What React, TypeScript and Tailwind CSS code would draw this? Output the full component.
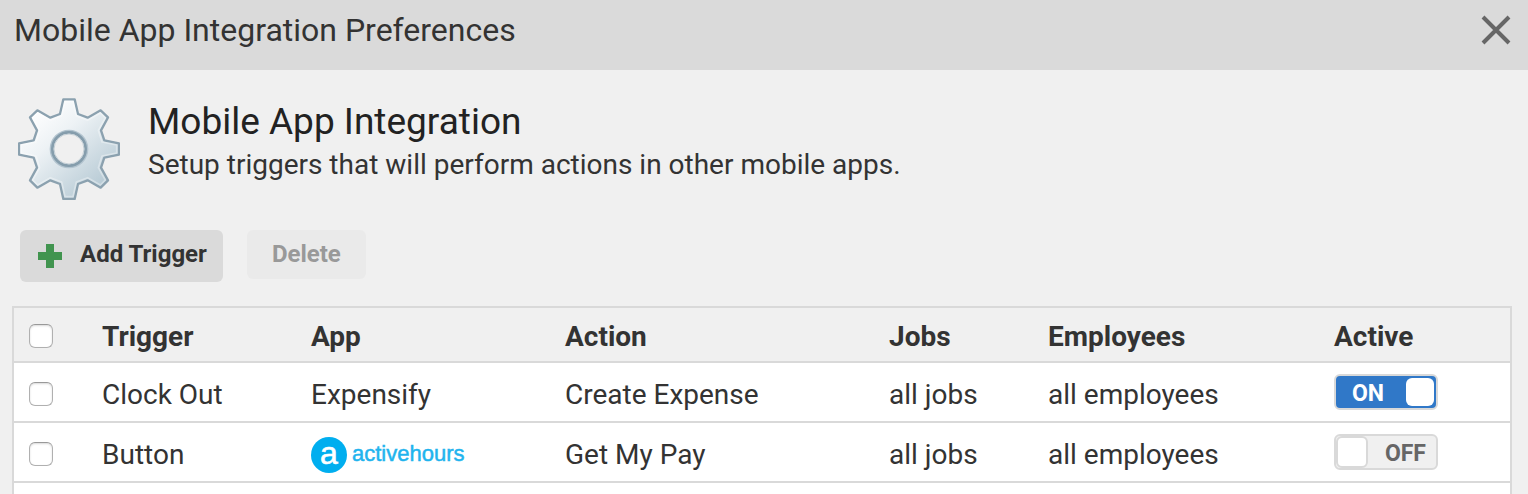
import { useState } from "react";
import clsx from "clsx";

const initialTriggers = [
  { id: 1, trigger: "Clock Out", app: "Expensify", action: "Create Expense", jobs: "all jobs", employees: "all employees", active: true },
  { id: 2, trigger: "Button", app: "activehours", action: "Get My Pay", jobs: "all jobs", employees: "all employees", active: false },
];

function GearIcon() {
  return (
    <svg viewBox="-153 -153 306 306" className="h-[102px] w-[102px] shrink-0" aria-hidden="true">
      <defs>
        <linearGradient id="gear-fill" x1="0.15" y1="0.1" x2="0.85" y2="0.9">
          <stop offset="0" stopColor="#ffffff" />
          <stop offset="0.35" stopColor="#edf2f5" />
          <stop offset="1" stopColor="#b4c8d3" />
        </linearGradient>
      </defs>
      <path
        fillRule="evenodd"
        fill="url(#gear-fill)"
        stroke="#8ba1af"
        strokeWidth="7"
        strokeLinejoin="round"
        d="M-17-149H17L27-105L56-94L95-116L117-95L96-56L106-26L150-17V17L106 26L96 56L117 94L95 116L56 94L27 105L17 150H-17L-27 105L-56 94L-95 116L-117 94L-96 56L-106 26L-150 17V-17L-106-26L-96-56L-117-95L-95-116L-56-94L-27-105ZM0-51A51 51 0 1 0 0 51A51 51 0 1 0 0-51Z"
      />
      <path
        fill="none"
        stroke="#ffffff"
        strokeOpacity="0.35"
        strokeWidth="5"
        strokeLinejoin="round"
        d="M-12-142H12L22-99L56-86L94-108L109-93L88-56L99-21L143-12V12L99 21L88 56L109 93L94 108L56 86L22 99L12 143H-12L-22 99L-56 86L-94 108L-109 93L-88 56L-99 21L-143 12V-12L-99-21L-88-56L-109-93L-94-108L-56-86L-22-99Z"
      />
      <circle r="55" fill="none" stroke="#b3c4cf" strokeWidth="6" />
      <circle r="50" fill="none" stroke="#859dac" strokeWidth="8" />
      <circle r="45" fill="none" stroke="#c3cfd6" strokeWidth="3" />
    </svg>
  );
}

function ActiveHoursLogo() {
  return (
    <svg viewBox="0 0 160 40" className="h-10 w-40" role="img" aria-label="activehours">
      <circle cx="18" cy="20" r="18" fill="#00aeef" />
      <text x="18" y="29" textAnchor="middle" fontSize="32" fontFamily="Liberation Sans, sans-serif" fill="#ffffff" stroke="#ffffff" strokeWidth="0.6">a</text>
      <text x="41" y="26" fontSize="22" fontFamily="Liberation Sans, sans-serif" fill="#1fb4ee" stroke="#1fb4ee" strokeWidth="0.5">activehours</text>
    </svg>
  );
}

function Checkbox({ label }: { label: string }) {
  return (
    <input
      type="checkbox"
      aria-label={label}
      className="block h-6 w-6 appearance-none rounded-md border border-[#b0b0b0] border-t-[#999999] bg-white shadow-[inset_0_1px_2px_rgba(0,0,0,0.15)] checked:bg-[#3078c8]"
    />
  );
}

function Toggle({ on, label, onChange }: { on: boolean; label: string; onChange: () => void }) {
  return (
    <button
      type="button"
      role="switch"
      aria-checked={on}
      aria-label={label}
      onClick={onChange}
      className={clsx(
        "flex h-9 w-[104px] items-center justify-between rounded-md border-2 border-[#d9d9d9] text-[23px] leading-7 font-bold",
        on ? "bg-[#3078c8] pr-0.5 pl-4 text-white" : "flex-row-reverse bg-[#f0f0f0] pr-2.5 text-[#666666]"
      )}
    >
      <span className="pt-1">{on ? "ON" : "OFF"}</span>
      <span className={clsx("rounded-md bg-white", on ? "h-7 w-7" : "h-8 w-8 border-2 border-[#d9d9d9]")} />
    </button>
  );
}

export default function App() {
  const [triggers, setTriggers] = useState(initialTriggers);

  const toggleActive = (id: number) =>
    setTriggers((rows) => rows.map((row) => (row.id === id ? { ...row, active: !row.active } : row)));

  return (
    <div className="flex min-h-screen flex-col bg-[#f0f0f0] font-[Roboto,sans-serif] text-[#333333]">
      <header className="flex h-[70px] items-start justify-between bg-[#dadada] pt-2.5 pr-4 pl-[14px]">
        <h1 className="text-[32px] leading-10">Mobile App Integration Preferences</h1>
        <button type="button" aria-label="Close" className="py-1">
          <svg viewBox="0 0 32 32" className="h-8 w-8" fill="none" stroke="#666666" strokeWidth="4">
            <path d="M3 3L29 29M29 3L3 29" />
          </svg>
        </button>
      </header>

      <section className="flex gap-7 px-[18px] pt-7">
        <GearIcon />
        <div className="pt-0.5">
          <h2 className="text-[37px] leading-[44px] text-[#222222]">Mobile App Integration</h2>
          <p className="text-[28px] leading-[42px]">Setup triggers that will perform actions in other mobile apps.</p>
        </div>
      </section>

      <div className="flex items-start gap-6 px-5 pt-[30px] pb-6 text-[24px] leading-8 font-bold">
        <button type="button" className="flex h-[52px] items-center gap-[18px] rounded-md bg-[#dadada] pr-4 pl-[18px]">
          <svg viewBox="0 0 24 24" className="h-6 w-6" fill="#41944f" aria-hidden="true">
            <path d="M8 0h8v8h8v8h-8v8H8v-8H0V8h8z" />
          </svg>
          <span className="pb-1">Add Trigger</span>
        </button>
        <button type="button" disabled className="h-[49px] rounded-md bg-[#eaeaea] px-[25px] pb-0.5 text-[#999999]">
          Delete
        </button>
      </div>

      <div className="mr-4 ml-3 flex-1 border-2 border-b-0 border-[#d9d9d9] bg-white">
        <table className="w-full table-fixed border-collapse text-left text-[28px] leading-9">
          <colgroup>
            <col className="w-[88px]" />
            <col className="w-[209px]" />
            <col className="w-[254px]" />
            <col className="w-[324px]" />
            <col className="w-[159px]" />
            <col className="w-[286px]" />
            <col className="w-[176px]" />
          </colgroup>
          <thead className="bg-[#f0f0f0]">
            <tr className="h-[54px] border-b-2 border-[#d9d9d9] font-bold [&>th]:pt-1">
              <td className="pt-0.5 pl-[15px]"><Checkbox label="Select all triggers" /></td>
              <th scope="col">Trigger</th>
              <th scope="col">App</th>
              <th scope="col">Action</th>
              <th scope="col">Jobs</th>
              <th scope="col">Employees</th>
              <th scope="col">Active</th>
            </tr>
          </thead>
          <tbody>
            {triggers.map((row) => (
              <tr key={row.id} className="h-[60px] border-b-2 border-[#d9d9d9]">
                <td className="pt-1 pl-[15px]"><Checkbox label={`Select ${row.trigger}`} /></td>
                <td className="pt-1.5">{row.trigger}</td>
                <td className="pt-1.5">{row.app === "activehours" ? <ActiveHoursLogo /> : row.app}</td>
                <td className="pt-1.5">{row.action}</td>
                <td className="pt-1.5">{row.jobs}</td>
                <td className="pt-1.5">{row.employees}</td>
                <td>
                  <Toggle on={row.active} label={`${row.trigger} active`} onChange={() => toggleActive(row.id)} />
                </td>
              </tr>
            ))}
          </tbody>
        </table>
      </div>
    </div>
  );
}
